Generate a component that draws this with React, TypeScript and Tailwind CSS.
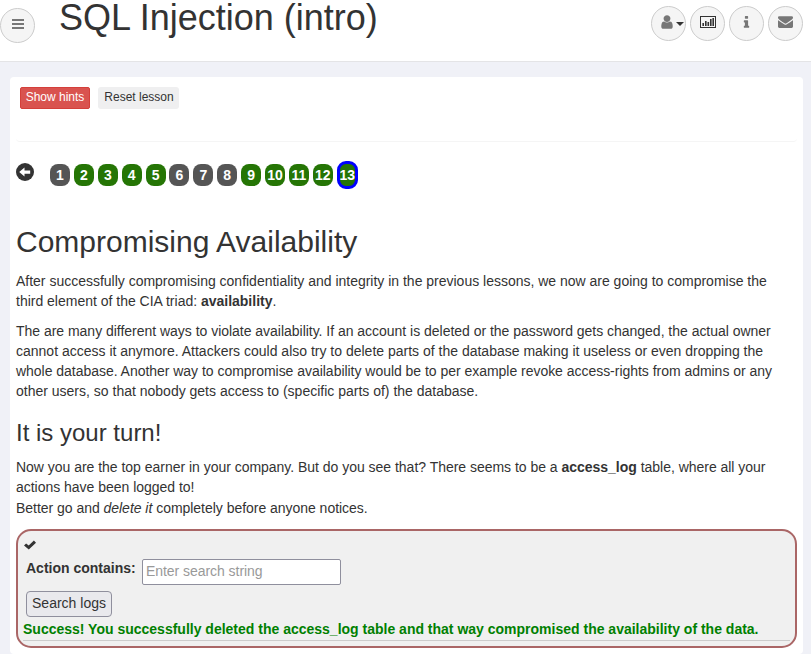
import React from "react";

const steps = [
  { n: 1, solved: false },
  { n: 2, solved: true },
  { n: 3, solved: true },
  { n: 4, solved: true },
  { n: 5, solved: true },
  { n: 6, solved: false },
  { n: 7, solved: false },
  { n: 8, solved: false },
  { n: 9, solved: true },
  { n: 10, solved: true },
  { n: 11, solved: true },
  { n: 12, solved: true },
];

function RoundButton({ children, label }: { children: React.ReactNode; label: string }) {
  return (
    <button
      aria-label={label}
      className="flex h-[35px] w-[35px] shrink-0 items-center justify-center rounded-full border border-[#ccc] bg-[#f5f5f5] text-[#777]"
    >
      {children}
    </button>
  );
}

function Glyph({ d, className }: { d: string; className: string }) {
  return (
    <svg viewBox="0 0 1792 1792" fill="currentColor" className={className}>
      <path d={d} />
    </svg>
  );
}

const USER =
  "M1536 1399q0 109-62.5 187t-150.5 78h-854q-88 0-150.5-78t-62.5-187q0-85 8.5-160.5t31.5-152 58.5-131 94-89 134.5-34.5q131 128 313 128t313-128q76 0 134.5 34.5t94 89 58.5 131 31.5 152 8.5 160.5zm-256-887q0 159-112.5 271.5t-271.5 112.5-271.5-112.5-112.5-271.5 112.5-271.5 271.5-112.5 271.5 112.5 112.5 271.5z";
const INFO =
  "M1216 1344v128q0 26-19 45t-45 19h-512q-26 0-45-19t-19-45v-128q0-26 19-45t45-19h64v-384h-64q-26 0-45-19t-19-45v-128q0-26 19-45t45-19h384q26 0 45 19t19 45v576h64q26 0 45 19t19 45zm-128-1152v192q0 26-19 45t-45 19h-256q-26 0-45-19t-19-45v-192q0-26 19-45t45-19h256q26 0 45 19t19 45z";
const ENVELOPE =
  "M1792 710v794q0 66-47 113t-113 47h-1472q-66 0-113-47t-47-113v-794q44 49 101 87 362 246 497 345 57 42 92.5 65.5t94.5 48 110 24.5h2q51 0 110-24.5t94.5-48 92.5-65.5q170-123 498-345 57-39 100-87zm0-294q0 79-49 151t-122 123q-376 261-468 325-10 7-42.5 31t-54 38.5-52 32.5-57.5 27-50 9h-2q-23 0-50-9t-57.5-27-52-32.5-54-38.5-42.5-31q-91-64-262-182.5t-205-142.5q-62-42-117-115.5t-55-136.5q0-78 41.5-130t118.5-52h1472q65 0 112.5 47t47.5 113z";

export default function App() {
  return (
    <div className="flex h-[654px] w-[811px] flex-col overflow-hidden bg-[#f0f1f7] font-['Liberation_Sans',Arial,sans-serif] text-sm leading-5 text-[#333]">
      <header className="flex h-[62px] shrink-0 items-start border-b border-[#e4e4e6] bg-white">
        <div className="pt-2">
          <RoundButton label="Menu">
            <svg viewBox="0 0 12 10" className="-mt-[3px] h-[10px] w-3" fill="currentColor" shapeRendering="crispEdges">
              <rect width="12" height="2" />
              <rect y="4" width="12" height="2" />
              <rect y="8" width="12" height="2" />
            </svg>
          </RoundButton>
        </div>
        <h1 className="ml-6 text-[36px] leading-[35px]">SQL Injection (intro)</h1>
        <div className="ml-auto flex gap-1 pr-2 pt-1.5">
          <RoundButton label="User">
            <Glyph d={USER} className="-mt-[4px] h-4 w-4 shrink-0" />
            <svg viewBox="0 0 8 4" className="ml-px -mr-1.5 h-1 w-2 shrink-0 text-[#333]" fill="currentColor">
              <path d="M0 0h8L4 4z" />
            </svg>
          </RoundButton>
          <RoundButton label="Report card">
            <svg viewBox="0 0 16 12" className="-mt-[3px] h-3 w-4 text-[#333]" fill="currentColor">
              <path fillRule="evenodd" d="M0 0h16v12H0zM1 1v10h14V1z" />
              <rect x="2.4" y="7" width="1.6" height="3" />
              <rect x="5" y="5" width="1.6" height="5" />
              <rect x="7.5" y="6" width="1.6" height="4" />
              <rect x="10" y="3" width="1.6" height="7" />
              <rect x="12.4" y="2" width="1.6" height="8" />
            </svg>
          </RoundButton>
          <RoundButton label="About">
            <Glyph d={INFO} className="-mt-[3px] h-[15px] w-[15px]" />
          </RoundButton>
          <RoundButton label="Contact">
            <Glyph d={ENVELOPE} className="-mt-[4px] h-[15px] w-[15px]" />
          </RoundButton>
        </div>
      </header>

      <main className="ml-[10px] mr-2 mt-[15px] h-[577px] shrink-0 rounded bg-white px-1.5">
        <div className="flex h-[65px] items-start gap-2 rounded border-b border-[#f5f5f5] pl-1 pt-[10px] text-xs leading-[18px]">
          <button className="h-[22px] w-[70px] rounded-[2px] border border-[#d43f3a] bg-[#d9534f] pb-0.5 text-white">Show hints</button>
          <button className="h-[22px] w-[81px] rounded-[3px] bg-[#efeff0] pb-0.5 pl-px">Reset lesson</button>
        </div>

        <nav className="flex h-[65px] items-center">
          <svg viewBox="0 0 18 18" className="-mt-[5px] mr-4 h-[18px] w-[18px]">
            <circle cx="9" cy="9" r="9" fill="#333" />
            <path d="M3.2 9l5.3-4.5v3h5.7v3.2H8.5v2.8z" fill="#fff" />
          </svg>
          <div className="flex items-center gap-[3.9px] text-sm font-bold text-white">
            {steps.map((s) => (
              <span
                key={s.n}
                className={`flex h-[22px] w-5 items-center justify-center rounded-[8px] ${s.solved ? "bg-[#257505]" : "bg-[#555]"}`}
              >
                {s.n}
              </span>
            ))}
            <span className="flex h-7 w-[21px] items-center justify-center rounded-[9px] border-[3px] border-[#00f] bg-[#257505]">
              13
            </span>
          </div>
        </nav>

        <h1 className="mt-[18px] text-[30px] leading-[33px]">Compromising Availability</h1>
        <p className="mt-[13px] whitespace-nowrap tracking-[-0.008px]">
          After successfully compromising confidentiality and integrity in the previous lessons, we now are going to compromise the
          <br />
          third element of the CIA triad: <b>availability</b>.
        </p>
        <p className="mt-[10px] whitespace-nowrap">
          <span className="tracking-[-0.022px]">
            The are many different ways to violate availability. If an account is deleted or the password gets changed, the actual owner
          </span>
          <br />
          cannot access it anymore. Attackers could also try to delete parts of the database making it useless or even dropping the
          <br />
          <span className="tracking-[-0.03px]">
            whole database. Another way to compromise availability would be to per example revoke access-rights from admins or any
          </span>
          <br />
          other users, so that nobody gets access to (specific parts of) the database.
        </p>
        <h2 className="mt-[19px] text-[24px] leading-[26px]">It is your turn!</h2>
        <p className="mt-[11px] whitespace-nowrap tracking-[-0.022px]">
          Now you are the top earner in your company. But do you see that? There seems to be a <b>access_log</b> table, where all your
          <br />
          actions have been logged to!
        </p>
        <p className="mt-px whitespace-nowrap tracking-[-0.03px]">
          Better go and <i>delete it</i> completely before anyone notices.
        </p>

        <section className="mt-[11px] h-[119px] rounded-[15px] border-2 border-[#a66] bg-[#f0f0f0] px-[5px] pt-[9px]">
          <svg viewBox="0 0 12 10" className="ml-px h-[10px] w-3" fill="#333">
            <path d="M0 5.6L2.1 3.4 4.7 5.5 9.9.6 12 2.7 4.8 9.6z" />
          </svg>
          <div className="mt-[9px] flex items-start pl-[3px]">
            <label className="-mt-px w-[116px] font-bold">Action contains:</label>
            <input
              placeholder="Enter search string"
              className="h-[26px] w-[199px] rounded-[2px] border border-[#8f8f9d] bg-white px-[3px] pb-0.5 tracking-[-0.05px] placeholder:text-[#999]"
            />
          </div>
          <button className="ml-[3px] mt-[6px] block h-[26px] w-[86px] rounded-[4px] border border-[#8f8f9d] bg-[#e9e9ed] pb-0.5">
            Search logs
          </button>
          <div className="mt-[2px] h-[22px] border-b border-[#ccc] font-bold text-[#008000]">
            Success! You successfully deleted the access_log table and that way compromised the availability of the data.
          </div>
        </section>
      </main>
    </div>
  );
}
